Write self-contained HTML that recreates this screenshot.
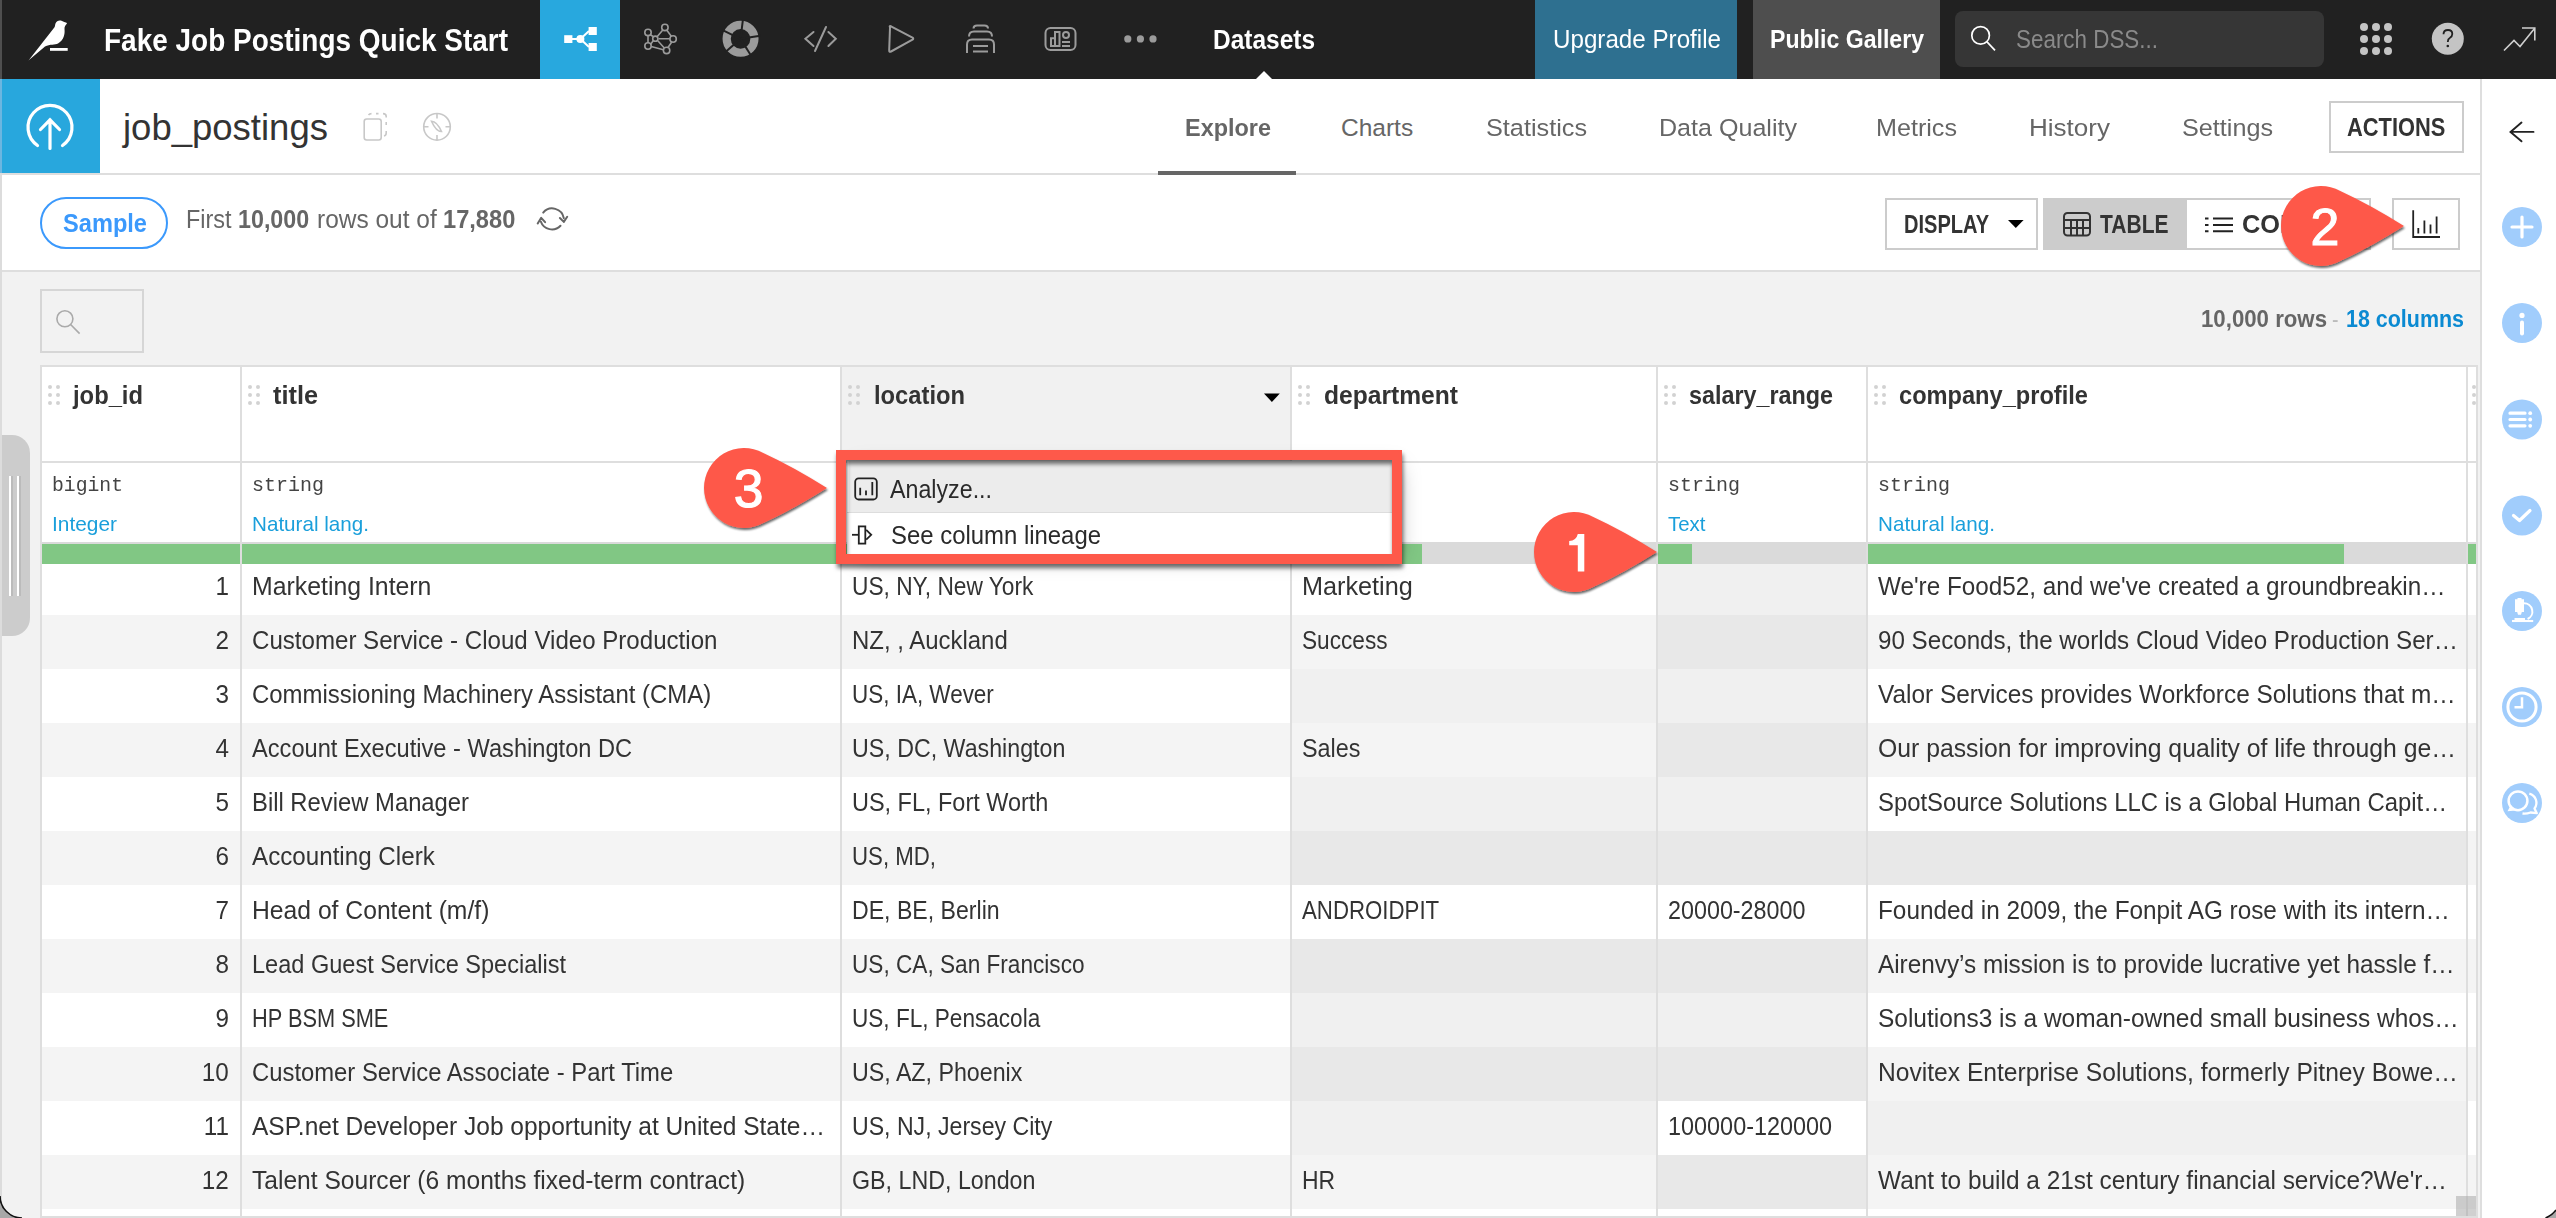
<!DOCTYPE html>
<html><head><meta charset="utf-8"><title>job_postings</title>
<style>
html,body{margin:0;padding:0;}
body{width:2556px;height:1218px;overflow:hidden;position:relative;background:#fff;font-family:"Liberation Sans",sans-serif;}
.t{position:absolute;line-height:1;white-space:nowrap;}
.r{position:absolute;}
.s{position:absolute;overflow:visible;}
</style></head><body>
<div class="r" style="left:0px;top:0px;width:2556px;height:1218px;background:#ffffff;"></div>
<div class="r" style="left:0px;top:0px;width:2556px;height:79px;background:#212121;"></div>
<svg class="s" style="left:20px;top:15px;" width="55" height="50" viewBox="20 15 55 50"><path fill="#fff" d="M27.8,61 L45,46.5 C50,44 55,45 58,43.5 C64,40 65,34 64.5,29 C64.3,27 65.5,25 67,23.5 L66.5,22.8 C65,22.6 63.5,21.8 62,21 C59.5,19.8 56.5,20.8 55.5,23.5 C55,25 55,26.5 54.5,27.2 L28.5,60.5 Z"/><rect fill="#fff" x="50" y="48" width="17.7" height="2.8"/></svg>
<div class="t" style="left:104.00px;top:23.80px;font-size:32px;color:#fff;font-weight:700;font-family:'Liberation Sans',sans-serif;transform:scaleX(0.8738);transform-origin:left top;">Fake Job Postings Quick Start</div>
<div class="r" style="left:540px;top:0px;width:80px;height:79px;background:#28a8de;"></div>
<svg class="s" style="left:555px;top:20px;" width="50" height="40" viewBox="555 20 50 40"><g fill="#fff" stroke="#fff"><rect x="564.2" y="35.2" width="8.2" height="7.8" stroke="none"/><rect x="588.6" y="27" width="8.2" height="8" stroke="none"/><rect x="588.6" y="43" width="8.2" height="8" stroke="none"/><circle cx="580.4" cy="39" r="4" stroke="none"/><path d="M572,39 H580 M580.4,39 L589,31 M580.4,39 L589,47" stroke-width="2" fill="none"/></g></svg>
<svg class="s" style="left:640px;top:20px;" width="40" height="40" viewBox="640 20 40 40"><g stroke="#9b9b9b" stroke-width="1.6" fill="none"><path d="M648,35.5 V43 M650.3,34.6 L653,36.5 M657.3,36.5 L663,29.8 M666.7,30 L671.3,36.3 M658.5,38.7 H669.8 M671.7,42 L668,47.5 M657.8,40.8 L664.3,48 M650.5,44.5 L653.2,40.8 M651.2,46.6 L663.3,49.7"/><circle cx="648" cy="32.4" r="3.2"/><circle cx="664.9" cy="27.4" r="3.2"/><circle cx="673.1" cy="39" r="3.2"/><circle cx="666.6" cy="50.4" r="3.2"/><circle cx="648" cy="46" r="3.2"/><circle cx="655.3" cy="38.7" r="2.6"/></g></svg>
<svg class="s" style="left:718px;top:17px;" width="45" height="45" viewBox="718 17 45 45"><circle cx="740.55" cy="38.85" r="13.9" stroke="#9b9b9b" stroke-width="8.2" fill="none"/><g stroke="#212121" stroke-width="2"><path d="M740.55,38.85 L742.99,19.00"/><path d="M740.55,38.85 L760.30,35.72"/><path d="M740.55,38.85 L751.15,55.81"/><path d="M740.55,38.85 L725.46,51.97"/><path d="M740.55,38.85 L722.57,30.08"/></g></svg>
<svg class="s" style="left:800px;top:20px;" width="42" height="40" viewBox="800 20 42 40"><g stroke="#9b9b9b" stroke-width="2" fill="none" stroke-linecap="round"><path d="M813.5,32 L805.4,38.7 L813.5,46 M828.4,32 L835.8,38.7 L828.4,46 M826,27 L815,51"/></g></svg>
<svg class="s" style="left:882px;top:20px;" width="40" height="40" viewBox="882 20 40 40"><path d="M890,27.5 Q889,25.5 891,26.3 L912.5,37.7 Q914,38.7 912.5,39.7 L891,51.5 Q889,52.6 889.2,50 Z" fill="none" stroke="#9b9b9b" stroke-width="2" stroke-linejoin="round"/></svg>
<svg class="s" style="left:960px;top:20px;" width="42" height="40" viewBox="960 20 42 40"><g stroke="#9b9b9b" stroke-width="2" fill="none"><path d="M973.5,28.5 Q973.5,25.5 977,25.5 H984.5 Q988,25.5 988,28.5"/><path d="M969,36.5 Q969,31.5 974,31.5 H987 Q992,31.5 992,36.5"/><path d="M967,53 V44.5 Q967,39.5 972,39.5 H989 Q994,39.5 994,44.5 V53"/><path d="M973,46 H988 M973,51.6 H988"/></g></svg>
<svg class="s" style="left:1040px;top:22px;" width="42" height="34" viewBox="1040 22 42 34"><g stroke="#9b9b9b" stroke-width="2" fill="none"><rect x="1045.5" y="28" width="30" height="22" rx="5"/><path d="M1051,46 V38.3 H1055 V46 Z M1055,46 V32 H1059.5 V46 Z"/><circle cx="1066" cy="35" r="3"/><path d="M1062,42 H1070 M1062,46 H1070"/></g></svg>
<svg class="s" style="left:1120px;top:30px;" width="40" height="18" viewBox="1120 30 40 18"><g fill="#9b9b9b"><circle cx="1127.8" cy="38.9" r="3.6"/><circle cx="1140.4" cy="38.9" r="3.6"/><circle cx="1153" cy="38.9" r="3.6"/></g></svg>
<div class="t" style="left:1213.00px;top:27.05px;font-size:27px;color:#fff;font-weight:700;font-family:'Liberation Sans',sans-serif;transform:scaleX(0.9062);transform-origin:left top;">Datasets</div>
<svg class="s" style="left:1250px;top:68px;" width="30" height="12" viewBox="1250 68 30 12"><path d="M1256,79 L1264,71 L1272,79 Z" fill="#fff"/></svg>
<div class="r" style="left:1535px;top:0px;width:202px;height:79px;background:#2e7090;"></div>
<div class="t" style="left:1552.50px;top:25.90px;font-size:26px;color:#fff;font-weight:400;font-family:'Liberation Sans',sans-serif;transform:scaleX(0.9299);transform-origin:left top;">Upgrade Profile</div>
<div class="r" style="left:1753px;top:0px;width:187px;height:79px;background:#4e4e4e;"></div>
<div class="t" style="left:1770.00px;top:25.90px;font-size:26px;color:#fff;font-weight:700;font-family:'Liberation Sans',sans-serif;transform:scaleX(0.8881);transform-origin:left top;">Public Gallery</div>
<div class="r" style="left:1955px;top:11px;width:369px;height:55.5px;background:#363636;border-radius:8px;"></div>
<svg class="s" style="left:1965px;top:20px;" width="40" height="40" viewBox="1965 20 40 40"><g stroke="#fff" stroke-width="1.7" fill="none"><circle cx="1980.6" cy="35.4" r="8.8"/><path d="M1987,41.8 L1995,50.3"/></g></svg>
<div class="t" style="left:2016.00px;top:26.75px;font-size:25px;color:#8a8a8a;font-weight:400;font-family:'Liberation Sans',sans-serif;transform:scaleX(0.8965);transform-origin:left top;">Search DSS...</div>
<svg class="s" style="left:2355px;top:18px;" width="45" height="45" viewBox="2355 18 45 45"><g fill="#c4c4c4"><circle cx="2364" cy="27" r="4"/><circle cx="2364" cy="39" r="4"/><circle cx="2364" cy="51" r="4"/><circle cx="2376" cy="27" r="4"/><circle cx="2376" cy="39" r="4"/><circle cx="2376" cy="51" r="4"/><circle cx="2388" cy="27" r="4"/><circle cx="2388" cy="39" r="4"/><circle cx="2388" cy="51" r="4"/></g></svg>
<svg class="s" style="left:2425px;top:17px;" width="45" height="45" viewBox="2425 17 45 45"><circle cx="2447.8" cy="38.8" r="16" fill="#c4c4c4"/><path d="M2443.5,34.3 Q2443.5,30 2448,30 Q2452.3,30 2452.3,34 Q2452.3,36.5 2449.7,38 Q2447.8,39 2447.8,42" stroke="#212121" stroke-width="1.8" fill="none"/><circle cx="2447.8" cy="46" r="1.3" fill="#212121"/></svg>
<svg class="s" style="left:2495px;top:20px;" width="50" height="40" viewBox="2495 20 50 40"><g stroke="#cfcfcf" stroke-width="1.6" fill="none"><path d="M2504,50.5 L2514,40.5 L2520,46.5 L2534.5,28.5"/><path d="M2522,28 H2534.8 V40.5"/></g></svg>
<div class="r" style="left:0px;top:79px;width:100px;height:94px;background:#28a7dd;"></div>
<svg class="s" style="left:0px;top:79px;" width="100" height="94" viewBox="0 79 100 94"><g stroke="#fff" stroke-width="3.2" fill="none" stroke-linecap="round"><path d="M37.5,145.5 A22,22 0 1 1 62.5,145.5"/><path d="M50,148.5 V119.5 M40.5,129.5 L50,119.8 L59.5,129.5"/></g></svg>
<div class="t" style="left:123.00px;top:109.97px;font-size:36.5px;color:#333;font-weight:400;font-family:'Liberation Sans',sans-serif;">job_postings</div>
<svg class="s" style="left:355px;top:105px;" width="100" height="45" viewBox="355 105 100 45"><g stroke="#c8c8c8" stroke-width="1.6" fill="none"><rect x="364.2" y="119" width="17" height="21" rx="2.5"/><path d="M368.5,115 Q369.5,113.6 371.5,113.6 M376,113.6 H378.5 M383,113.6 Q386.2,113.6 386.2,116.5 V117.5 M386.2,122 V125 M386.2,131 V133 Q386.2,135.5 384,136"/><circle cx="437" cy="126.8" r="13.3"/><path d="M437,113.5 V118.5 M437,135 V140 M423.7,126.8 H428.5 M445.5,126.8 H450.3"/><path d="M431.5,121.2 Q437,121.5 441.5,131.5 Q436,131.5 431.5,121.2 Z"/></g></svg>
<div class="t" style="left:1185.00px;top:115.98px;font-size:24.5px;color:#666;font-weight:700;font-family:'Liberation Sans',sans-serif;transform:scaleX(0.9570);transform-origin:left top;">Explore</div>
<div class="t" style="left:1341.00px;top:115.98px;font-size:24.5px;color:#666;font-weight:400;font-family:'Liberation Sans',sans-serif;">Charts</div>
<div class="t" style="left:1486.00px;top:115.98px;font-size:24.5px;color:#666;font-weight:400;font-family:'Liberation Sans',sans-serif;transform:scaleX(1.0304);transform-origin:left top;">Statistics</div>
<div class="t" style="left:1659.00px;top:115.98px;font-size:24.5px;color:#666;font-weight:400;font-family:'Liberation Sans',sans-serif;transform:scaleX(1.0237);transform-origin:left top;">Data Quality</div>
<div class="t" style="left:1876.00px;top:115.98px;font-size:24.5px;color:#666;font-weight:400;font-family:'Liberation Sans',sans-serif;transform:scaleX(1.0260);transform-origin:left top;">Metrics</div>
<div class="t" style="left:2029.00px;top:115.98px;font-size:24.5px;color:#666;font-weight:400;font-family:'Liberation Sans',sans-serif;transform:scaleX(1.0626);transform-origin:left top;">History</div>
<div class="t" style="left:2182.00px;top:115.98px;font-size:24.5px;color:#666;font-weight:400;font-family:'Liberation Sans',sans-serif;transform:scaleX(1.0279);transform-origin:left top;">Settings</div>
<div class="r" style="left:0px;top:173px;width:2480px;height:2px;background:#dedede;"></div>
<div class="r" style="left:1158px;top:171px;width:138px;height:4px;background:#666;"></div>
<div class="r" style="left:2329px;top:101px;width:135px;height:52px;background:#fff;box-sizing:border-box;border:2px solid #cccccc;"></div>
<div class="t" style="left:2346.60px;top:115.33px;font-size:25.5px;color:#333;font-weight:700;font-family:'Liberation Sans',sans-serif;transform:scaleX(0.8575);transform-origin:left top;">ACTIONS</div>
<div class="r" style="left:2480px;top:79px;width:2px;height:1139px;background:#dedede;"></div>
<svg class="s" style="left:2505px;top:115px;" width="35" height="35" viewBox="2505 115 35 35"><g stroke="#222" stroke-width="1.9" fill="none" stroke-linecap="round"><path d="M2510.5,131.9 H2533.5 M2521.5,122.6 L2510.5,131.9 L2521.5,141.3"/></g></svg>
<svg class="s" style="left:2500px;top:205px;" width="44" height="44" viewBox="2500 205 44 44"><circle cx="2522" cy="227" r="20" fill="#a1cdfc"/><path d="M2512,227 H2532 M2522,217 V237" stroke="#fff" stroke-width="3.2" stroke-linecap="round"/></svg>
<svg class="s" style="left:2500px;top:301px;" width="44" height="44" viewBox="2500 301 44 44"><circle cx="2522" cy="323" r="20" fill="#a1cdfc"/><circle cx="2522" cy="315.4" r="2.6" fill="#fff"/><path d="M2522,322.5 V333.5" stroke="#fff" stroke-width="4" stroke-linecap="round"/></svg>
<svg class="s" style="left:2500px;top:397px;" width="44" height="44" viewBox="2500 397 44 44"><circle cx="2522" cy="419.5" r="20" fill="#a1cdfc"/><path d="M2510,413.2 H2525 M2510,419.5 H2525 M2510,425.8 H2525" stroke="#fff" stroke-width="3.2" stroke-linecap="round"/><circle cx="2530.2" cy="413.2" r="1.9" fill="#fff"/><circle cx="2530.2" cy="419.5" r="1.9" fill="#fff"/><circle cx="2530.2" cy="425.8" r="1.9" fill="#fff"/></svg>
<svg class="s" style="left:2500px;top:493px;" width="44" height="44" viewBox="2500 493 44 44"><circle cx="2522" cy="515.5" r="20" fill="#a1cdfc"/><path d="M2513.5,515.5 L2519.5,520.5 L2530,510.5" stroke="#fff" stroke-width="3.2" fill="none" stroke-linecap="round" stroke-linejoin="round"/></svg>
<svg class="s" style="left:2500px;top:589px;" width="44" height="44" viewBox="2500 589 44 44"><circle cx="2522" cy="611" r="20" fill="#a1cdfc"/><path d="M2515,599.2 H2517.5 V598 H2521.5 V599.2 H2524 V612.1 H2521.8 L2521,614.8 H2518 L2517.2,612.1 H2515 Z" fill="#fff"/><path d="M2524,603.2 A8.3,8.3 0 0 1 2527.6,619" stroke="#fff" stroke-width="2" fill="none"/><path d="M2512,621 H2533.2" stroke="#fff" stroke-width="2.1"/><path d="M2514.5,619 H2525" stroke="#fff" stroke-width="2"/></svg>
<svg class="s" style="left:2500px;top:685px;" width="44" height="44" viewBox="2500 685 44 44"><circle cx="2522" cy="707" r="20" fill="#a1cdfc"/><circle cx="2522" cy="707" r="14.1" stroke="#fff" stroke-width="3" fill="none"/><path d="M2522,697.3 V707.3 H2514.5" stroke="#fff" stroke-width="2.5" fill="none"/></svg>
<svg class="s" style="left:2500px;top:781px;" width="44" height="44" viewBox="2500 781 44 44"><circle cx="2522" cy="803" r="20" fill="#a1cdfc"/><circle cx="2518" cy="800.8" r="9.4" stroke="#fff" stroke-width="2.5" fill="none"/><path d="M2507.5,811.2 L2510.8,805 L2516,810.6 Z" fill="#fff"/><path d="M2529.3,793.6 A9.5,9.5 0 0 1 2534.5,808.5 L2536.8,813.2 L2530.5,812.5 Q2526.5,814 2522.5,813.5" stroke="#fff" stroke-width="2.3" fill="none" stroke-linejoin="round"/></svg>
<div class="r" style="left:40px;top:197px;width:128px;height:52px;background:#fff;box-sizing:border-box;border:2px solid #3b99fc;border-radius:26px;"></div>
<div class="t" style="left:62.80px;top:211.32px;font-size:25.5px;color:#3b99fc;font-weight:700;font-family:'Liberation Sans',sans-serif;transform:scaleX(0.9261);transform-origin:left top;">Sample</div>
<div class="t" style="left:185.50px;top:207.32px;font-size:25.5px;color:#666;font-weight:400;font-family:'Liberation Sans',sans-serif;transform:scaleX(0.9179);transform-origin:left top;">First</div>
<div class="t" style="left:238.30px;top:207.32px;font-size:25.5px;color:#666;font-weight:700;font-family:'Liberation Sans',sans-serif;transform:scaleX(0.9129);transform-origin:left top;">10,000</div>
<div class="t" style="left:317.20px;top:207.32px;font-size:25.5px;color:#666;font-weight:400;font-family:'Liberation Sans',sans-serif;transform:scaleX(0.9597);transform-origin:left top;">rows out of</div>
<div class="t" style="left:443.20px;top:207.32px;font-size:25.5px;color:#666;font-weight:700;font-family:'Liberation Sans',sans-serif;transform:scaleX(0.9270);transform-origin:left top;">17,880</div>
<svg class="s" style="left:535px;top:203px;" width="35" height="34" viewBox="535 203 35 34"><g stroke="#666" stroke-width="2" fill="none" stroke-linecap="round" stroke-linejoin="round"><path d="M543.2,212.6 A11.8,11.8 0 0 1 563.8,218.2"/><path d="M560.5,225.7 A11.8,11.8 0 0 1 540.8,221.5"/><path d="M537.7,223.5 L541.2,217.8 L545.1,222.2"/><path d="M567.2,216.8 L563.8,221.9 L559.9,218"/></g></svg>
<div class="r" style="left:1885px;top:198px;width:153px;height:52px;background:#fff;box-sizing:border-box;border:2px solid #cccccc;"></div>
<div class="t" style="left:1904.20px;top:212.32px;font-size:25.5px;color:#333;font-weight:700;font-family:'Liberation Sans',sans-serif;transform:scaleX(0.7858);transform-origin:left top;">DISPLAY</div>
<svg class="s" style="left:2005px;top:218px;" width="22" height="12" viewBox="2005 218 22 12"><path d="M2008,220 H2023.6 L2015.8,228 Z" fill="#000"/></svg>
<div class="r" style="left:2043px;top:198px;width:328px;height:52px;background:#fff;box-sizing:border-box;border:2px solid #cccccc;"></div>
<div class="r" style="left:2043px;top:198px;width:144px;height:52px;background:#cccccc;"></div>
<svg class="s" style="left:2060px;top:208px;" width="35" height="32" viewBox="2060 208 35 32"><g stroke="#333" stroke-width="2" fill="none"><rect x="2064" y="213" width="26" height="22.5" rx="3.5"/><path d="M2064,220 H2090 M2064,228 H2090 M2071,220 V235.5 M2077,220 V235.5 M2083,220 V235.5"/></g></svg>
<div class="t" style="left:2099.60px;top:212.32px;font-size:25.5px;color:#333;font-weight:700;font-family:'Liberation Sans',sans-serif;transform:scaleX(0.8243);transform-origin:left top;">TABLE</div>
<svg class="s" style="left:2200px;top:212px;" width="40" height="25" viewBox="2200 212 40 25"><g stroke="#222" stroke-width="2" fill="none"><path d="M2205,218.5 H2208.5 M2205,225 H2208.5 M2205,231.2 H2208.5 M2213,218.5 H2233 M2213,225 H2233 M2213,231.2 H2233"/></g></svg>
<div class="t" style="left:2242.00px;top:212.32px;font-size:25.5px;color:#333;font-weight:700;font-family:'Liberation Sans',sans-serif;transform:scaleX(0.9930);transform-origin:left top;">COLUMNS</div>
<div class="r" style="left:2392px;top:198px;width:68px;height:52px;background:#fff;box-sizing:border-box;border:2px solid #cccccc;"></div>
<svg class="s" style="left:2405px;top:205px;" width="42" height="38" viewBox="2405 205 42 38"><g stroke="#222" stroke-width="1.8" fill="none"><path d="M2413.2,210.3 V237 H2440 M2418.3,228 V233.6 M2424.4,220.5 V233.6 M2430.5,224.4 V233.6 M2436.6,216.4 V233.6"/></g></svg>
<div class="r" style="left:0px;top:270px;width:2480px;height:948px;background:#f2f2f2;"></div>
<div class="r" style="left:0px;top:270px;width:2480px;height:2px;background:#dedede;"></div>
<div class="r" style="left:40px;top:289px;width:104px;height:64px;background:#f2f2f2;box-sizing:border-box;border:2px solid #d6d6d6;"></div>
<svg class="s" style="left:52px;top:305px;" width="35" height="35" viewBox="52 305 35 35"><g stroke="#aaa" stroke-width="1.6" fill="none"><circle cx="64.9" cy="318.8" r="8"/><path d="M70.6,324.5 L79.6,333.6"/></g></svg>
<div class="t" style="left:2201.00px;top:308.45px;font-size:23px;color:#666;font-weight:700;font-family:'Liberation Sans',sans-serif;transform:scaleX(0.9661);transform-origin:left top;">10,000 rows</div>
<div class="t" style="left:2332.00px;top:308.45px;font-size:23px;color:#bbbbbb;font-weight:400;font-family:'Liberation Sans',sans-serif;transform:scaleX(0.8486);transform-origin:left top;">-</div>
<div class="t" style="left:2345.50px;top:308.45px;font-size:23px;color:#0b8ad2;font-weight:700;font-family:'Liberation Sans',sans-serif;transform:scaleX(0.9325);transform-origin:left top;">18 columns</div>
<div class="r" style="left:2px;top:435px;width:28px;height:201px;background:#cccccc;border-radius:0 18px 18px 0;"></div>
<div class="r" style="left:9px;top:476px;width:2px;height:120px;background:#ffffff;"></div>
<div class="r" style="left:11px;top:476px;width:2px;height:120px;background:#bbbbbb;"></div>
<div class="r" style="left:17px;top:476px;width:2px;height:120px;background:#ffffff;"></div>
<div class="r" style="left:19px;top:476px;width:2px;height:120px;background:#bbbbbb;"></div>
<div class="r" style="left:0px;top:79px;width:2px;height:1139px;background:#dcdcdc;"></div>
<div class="r" style="left:0px;top:0px;width:2px;height:79px;background:#4f4f4f;"></div>
<div class="r" style="left:0px;top:79px;width:2px;height:94px;background:#6cb6e0;"></div>
<div class="r" style="left:40px;top:365px;width:2438px;height:853px;background:#dedede;"></div>
<div class="r" style="left:42px;top:367px;width:2434px;height:849px;background:#ffffff;"></div>
<div class="r" style="left:842px;top:367px;width:448px;height:94px;background:#f1f1f1;"></div>
<div class="r" style="left:42px;top:461px;width:2434px;height:2px;background:#dedede;"></div>
<div class="r" style="left:42px;top:542px;width:2434px;height:22px;background:#dadada;"></div>
<div class="r" style="left:42px;top:544px;width:198px;height:20px;background:#81c784;"></div>
<div class="r" style="left:242px;top:544px;width:598px;height:20px;background:#81c784;"></div>
<div class="r" style="left:842px;top:544px;width:448px;height:20px;background:#81c784;"></div>
<div class="r" style="left:1292px;top:544px;width:130px;height:20px;background:#81c784;"></div>
<div class="r" style="left:1658px;top:544px;width:34px;height:20px;background:#81c784;"></div>
<div class="r" style="left:1868px;top:544px;width:476px;height:20px;background:#81c784;"></div>
<div class="r" style="left:2468px;top:544px;width:8px;height:20px;background:#81c784;"></div>
<div class="r" style="left:42px;top:564px;width:198px;height:51px;background:#ffffff;"></div>
<div class="r" style="left:242px;top:564px;width:598px;height:51px;background:#ffffff;"></div>
<div class="r" style="left:842px;top:564px;width:448px;height:51px;background:#ffffff;"></div>
<div class="r" style="left:1292px;top:564px;width:364px;height:51px;background:#ffffff;"></div>
<div class="r" style="left:1658px;top:564px;width:208px;height:51px;background:#f0f0f0;"></div>
<div class="r" style="left:1868px;top:564px;width:598px;height:51px;background:#ffffff;"></div>
<div class="r" style="left:2468px;top:564px;width:8px;height:51px;background:#ffffff;"></div>
<div class="t" style="left:215.10px;top:573.75px;font-size:25px;color:#333;font-weight:400;font-family:'Liberation Sans',sans-serif;transform:scaleX(0.9700);transform-origin:right top;">1</div>
<div class="t" style="left:252.00px;top:573.75px;font-size:25px;color:#333;font-weight:400;font-family:'Liberation Sans',sans-serif;transform:scaleX(0.9932);transform-origin:left top;">Marketing Intern</div>
<div class="t" style="left:852.00px;top:573.75px;font-size:25px;color:#333;font-weight:400;font-family:'Liberation Sans',sans-serif;transform:scaleX(0.9085);transform-origin:left top;">US, NY, New York</div>
<div class="t" style="left:1302.00px;top:573.75px;font-size:25px;color:#333;font-weight:400;font-family:'Liberation Sans',sans-serif;transform:scaleX(1.0094);transform-origin:left top;">Marketing</div>
<div class="t" style="left:1878.00px;top:573.75px;font-size:25px;color:#333;font-weight:400;font-family:'Liberation Sans',sans-serif;transform:scaleX(0.9711);transform-origin:left top;">We're Food52, and we've created a groundbreakin…</div>
<div class="r" style="left:42px;top:615px;width:198px;height:54px;background:#f4f4f4;"></div>
<div class="r" style="left:242px;top:615px;width:598px;height:54px;background:#f4f4f4;"></div>
<div class="r" style="left:842px;top:615px;width:448px;height:54px;background:#f4f4f4;"></div>
<div class="r" style="left:1292px;top:615px;width:364px;height:54px;background:#f4f4f4;"></div>
<div class="r" style="left:1658px;top:615px;width:208px;height:54px;background:#e8e8e8;"></div>
<div class="r" style="left:1868px;top:615px;width:598px;height:54px;background:#f4f4f4;"></div>
<div class="r" style="left:2468px;top:615px;width:8px;height:54px;background:#f4f4f4;"></div>
<div class="t" style="left:215.10px;top:627.75px;font-size:25px;color:#333;font-weight:400;font-family:'Liberation Sans',sans-serif;transform:scaleX(0.9700);transform-origin:right top;">2</div>
<div class="t" style="left:252.00px;top:627.75px;font-size:25px;color:#333;font-weight:400;font-family:'Liberation Sans',sans-serif;transform:scaleX(0.9634);transform-origin:left top;">Customer Service - Cloud Video Production</div>
<div class="t" style="left:852.00px;top:627.75px;font-size:25px;color:#333;font-weight:400;font-family:'Liberation Sans',sans-serif;transform:scaleX(0.9579);transform-origin:left top;">NZ, , Auckland</div>
<div class="t" style="left:1302.00px;top:627.75px;font-size:25px;color:#333;font-weight:400;font-family:'Liberation Sans',sans-serif;transform:scaleX(0.9055);transform-origin:left top;">Success</div>
<div class="t" style="left:1878.00px;top:627.75px;font-size:25px;color:#333;font-weight:400;font-family:'Liberation Sans',sans-serif;transform:scaleX(0.9665);transform-origin:left top;">90 Seconds, the worlds Cloud Video Production Ser…</div>
<div class="r" style="left:42px;top:669px;width:198px;height:54px;background:#ffffff;"></div>
<div class="r" style="left:242px;top:669px;width:598px;height:54px;background:#ffffff;"></div>
<div class="r" style="left:842px;top:669px;width:448px;height:54px;background:#ffffff;"></div>
<div class="r" style="left:1292px;top:669px;width:364px;height:54px;background:#f0f0f0;"></div>
<div class="r" style="left:1658px;top:669px;width:208px;height:54px;background:#f0f0f0;"></div>
<div class="r" style="left:1868px;top:669px;width:598px;height:54px;background:#ffffff;"></div>
<div class="r" style="left:2468px;top:669px;width:8px;height:54px;background:#ffffff;"></div>
<div class="t" style="left:215.10px;top:681.75px;font-size:25px;color:#333;font-weight:400;font-family:'Liberation Sans',sans-serif;transform:scaleX(0.9700);transform-origin:right top;">3</div>
<div class="t" style="left:252.00px;top:681.75px;font-size:25px;color:#333;font-weight:400;font-family:'Liberation Sans',sans-serif;transform:scaleX(0.9581);transform-origin:left top;">Commissioning Machinery Assistant (CMA)</div>
<div class="t" style="left:852.00px;top:681.75px;font-size:25px;color:#333;font-weight:400;font-family:'Liberation Sans',sans-serif;transform:scaleX(0.8981);transform-origin:left top;">US, IA, Wever</div>
<div class="t" style="left:1878.00px;top:681.75px;font-size:25px;color:#333;font-weight:400;font-family:'Liberation Sans',sans-serif;transform:scaleX(0.9753);transform-origin:left top;">Valor Services provides Workforce Solutions that m…</div>
<div class="r" style="left:42px;top:723px;width:198px;height:54px;background:#f4f4f4;"></div>
<div class="r" style="left:242px;top:723px;width:598px;height:54px;background:#f4f4f4;"></div>
<div class="r" style="left:842px;top:723px;width:448px;height:54px;background:#f4f4f4;"></div>
<div class="r" style="left:1292px;top:723px;width:364px;height:54px;background:#f4f4f4;"></div>
<div class="r" style="left:1658px;top:723px;width:208px;height:54px;background:#e8e8e8;"></div>
<div class="r" style="left:1868px;top:723px;width:598px;height:54px;background:#f4f4f4;"></div>
<div class="r" style="left:2468px;top:723px;width:8px;height:54px;background:#f4f4f4;"></div>
<div class="t" style="left:215.10px;top:735.75px;font-size:25px;color:#333;font-weight:400;font-family:'Liberation Sans',sans-serif;transform:scaleX(0.9700);transform-origin:right top;">4</div>
<div class="t" style="left:252.00px;top:735.75px;font-size:25px;color:#333;font-weight:400;font-family:'Liberation Sans',sans-serif;transform:scaleX(0.9456);transform-origin:left top;">Account Executive - Washington DC</div>
<div class="t" style="left:852.00px;top:735.75px;font-size:25px;color:#333;font-weight:400;font-family:'Liberation Sans',sans-serif;transform:scaleX(0.9290);transform-origin:left top;">US, DC, Washington</div>
<div class="t" style="left:1302.00px;top:735.75px;font-size:25px;color:#333;font-weight:400;font-family:'Liberation Sans',sans-serif;transform:scaleX(0.9344);transform-origin:left top;">Sales</div>
<div class="t" style="left:1878.00px;top:735.75px;font-size:25px;color:#333;font-weight:400;font-family:'Liberation Sans',sans-serif;transform:scaleX(0.9904);transform-origin:left top;">Our passion for improving quality of life through ge…</div>
<div class="r" style="left:42px;top:777px;width:198px;height:54px;background:#ffffff;"></div>
<div class="r" style="left:242px;top:777px;width:598px;height:54px;background:#ffffff;"></div>
<div class="r" style="left:842px;top:777px;width:448px;height:54px;background:#ffffff;"></div>
<div class="r" style="left:1292px;top:777px;width:364px;height:54px;background:#f0f0f0;"></div>
<div class="r" style="left:1658px;top:777px;width:208px;height:54px;background:#f0f0f0;"></div>
<div class="r" style="left:1868px;top:777px;width:598px;height:54px;background:#ffffff;"></div>
<div class="r" style="left:2468px;top:777px;width:8px;height:54px;background:#ffffff;"></div>
<div class="t" style="left:215.10px;top:789.75px;font-size:25px;color:#333;font-weight:400;font-family:'Liberation Sans',sans-serif;transform:scaleX(0.9700);transform-origin:right top;">5</div>
<div class="t" style="left:252.00px;top:789.75px;font-size:25px;color:#333;font-weight:400;font-family:'Liberation Sans',sans-serif;transform:scaleX(0.9524);transform-origin:left top;">Bill Review Manager</div>
<div class="t" style="left:852.00px;top:789.75px;font-size:25px;color:#333;font-weight:400;font-family:'Liberation Sans',sans-serif;transform:scaleX(0.9383);transform-origin:left top;">US, FL, Fort Worth</div>
<div class="t" style="left:1878.00px;top:789.75px;font-size:25px;color:#333;font-weight:400;font-family:'Liberation Sans',sans-serif;transform:scaleX(0.9546);transform-origin:left top;">SpotSource Solutions LLC is a Global Human Capit…</div>
<div class="r" style="left:42px;top:831px;width:198px;height:54px;background:#f4f4f4;"></div>
<div class="r" style="left:242px;top:831px;width:598px;height:54px;background:#f4f4f4;"></div>
<div class="r" style="left:842px;top:831px;width:448px;height:54px;background:#f4f4f4;"></div>
<div class="r" style="left:1292px;top:831px;width:364px;height:54px;background:#e8e8e8;"></div>
<div class="r" style="left:1658px;top:831px;width:208px;height:54px;background:#e8e8e8;"></div>
<div class="r" style="left:1868px;top:831px;width:598px;height:54px;background:#e8e8e8;"></div>
<div class="r" style="left:2468px;top:831px;width:8px;height:54px;background:#f4f4f4;"></div>
<div class="t" style="left:215.10px;top:843.75px;font-size:25px;color:#333;font-weight:400;font-family:'Liberation Sans',sans-serif;transform:scaleX(0.9700);transform-origin:right top;">6</div>
<div class="t" style="left:252.00px;top:843.75px;font-size:25px;color:#333;font-weight:400;font-family:'Liberation Sans',sans-serif;transform:scaleX(0.9672);transform-origin:left top;">Accounting Clerk</div>
<div class="t" style="left:852.00px;top:843.75px;font-size:25px;color:#333;font-weight:400;font-family:'Liberation Sans',sans-serif;transform:scaleX(0.8892);transform-origin:left top;">US, MD,</div>
<div class="r" style="left:42px;top:885px;width:198px;height:54px;background:#ffffff;"></div>
<div class="r" style="left:242px;top:885px;width:598px;height:54px;background:#ffffff;"></div>
<div class="r" style="left:842px;top:885px;width:448px;height:54px;background:#ffffff;"></div>
<div class="r" style="left:1292px;top:885px;width:364px;height:54px;background:#ffffff;"></div>
<div class="r" style="left:1658px;top:885px;width:208px;height:54px;background:#ffffff;"></div>
<div class="r" style="left:1868px;top:885px;width:598px;height:54px;background:#ffffff;"></div>
<div class="r" style="left:2468px;top:885px;width:8px;height:54px;background:#ffffff;"></div>
<div class="t" style="left:215.10px;top:897.75px;font-size:25px;color:#333;font-weight:400;font-family:'Liberation Sans',sans-serif;transform:scaleX(0.9700);transform-origin:right top;">7</div>
<div class="t" style="left:252.00px;top:897.75px;font-size:25px;color:#333;font-weight:400;font-family:'Liberation Sans',sans-serif;transform:scaleX(0.9875);transform-origin:left top;">Head of Content (m/f)</div>
<div class="t" style="left:852.00px;top:897.75px;font-size:25px;color:#333;font-weight:400;font-family:'Liberation Sans',sans-serif;transform:scaleX(0.9241);transform-origin:left top;">DE, BE, Berlin</div>
<div class="t" style="left:1302.00px;top:897.75px;font-size:25px;color:#333;font-weight:400;font-family:'Liberation Sans',sans-serif;transform:scaleX(0.8897);transform-origin:left top;">ANDROIDPIT</div>
<div class="t" style="left:1668.00px;top:897.75px;font-size:25px;color:#333;font-weight:400;font-family:'Liberation Sans',sans-serif;transform:scaleX(0.9328);transform-origin:left top;">20000-28000</div>
<div class="t" style="left:1878.00px;top:897.75px;font-size:25px;color:#333;font-weight:400;font-family:'Liberation Sans',sans-serif;transform:scaleX(0.9729);transform-origin:left top;">Founded in 2009, the Fonpit AG rose with its intern…</div>
<div class="r" style="left:42px;top:939px;width:198px;height:54px;background:#f4f4f4;"></div>
<div class="r" style="left:242px;top:939px;width:598px;height:54px;background:#f4f4f4;"></div>
<div class="r" style="left:842px;top:939px;width:448px;height:54px;background:#f4f4f4;"></div>
<div class="r" style="left:1292px;top:939px;width:364px;height:54px;background:#e8e8e8;"></div>
<div class="r" style="left:1658px;top:939px;width:208px;height:54px;background:#e8e8e8;"></div>
<div class="r" style="left:1868px;top:939px;width:598px;height:54px;background:#f4f4f4;"></div>
<div class="r" style="left:2468px;top:939px;width:8px;height:54px;background:#f4f4f4;"></div>
<div class="t" style="left:215.10px;top:951.75px;font-size:25px;color:#333;font-weight:400;font-family:'Liberation Sans',sans-serif;transform:scaleX(0.9700);transform-origin:right top;">8</div>
<div class="t" style="left:252.00px;top:951.75px;font-size:25px;color:#333;font-weight:400;font-family:'Liberation Sans',sans-serif;transform:scaleX(0.9417);transform-origin:left top;">Lead Guest Service Specialist</div>
<div class="t" style="left:852.00px;top:951.75px;font-size:25px;color:#333;font-weight:400;font-family:'Liberation Sans',sans-serif;transform:scaleX(0.9047);transform-origin:left top;">US, CA, San Francisco</div>
<div class="t" style="left:1878.00px;top:951.75px;font-size:25px;color:#333;font-weight:400;font-family:'Liberation Sans',sans-serif;transform:scaleX(0.9725);transform-origin:left top;">Airenvy’s mission is to provide lucrative yet hassle f…</div>
<div class="r" style="left:42px;top:993px;width:198px;height:54px;background:#ffffff;"></div>
<div class="r" style="left:242px;top:993px;width:598px;height:54px;background:#ffffff;"></div>
<div class="r" style="left:842px;top:993px;width:448px;height:54px;background:#ffffff;"></div>
<div class="r" style="left:1292px;top:993px;width:364px;height:54px;background:#f0f0f0;"></div>
<div class="r" style="left:1658px;top:993px;width:208px;height:54px;background:#f0f0f0;"></div>
<div class="r" style="left:1868px;top:993px;width:598px;height:54px;background:#ffffff;"></div>
<div class="r" style="left:2468px;top:993px;width:8px;height:54px;background:#ffffff;"></div>
<div class="t" style="left:215.10px;top:1005.75px;font-size:25px;color:#333;font-weight:400;font-family:'Liberation Sans',sans-serif;transform:scaleX(0.9700);transform-origin:right top;">9</div>
<div class="t" style="left:252.00px;top:1005.75px;font-size:25px;color:#333;font-weight:400;font-family:'Liberation Sans',sans-serif;transform:scaleX(0.8710);transform-origin:left top;">HP BSM SME</div>
<div class="t" style="left:852.00px;top:1005.75px;font-size:25px;color:#333;font-weight:400;font-family:'Liberation Sans',sans-serif;transform:scaleX(0.9030);transform-origin:left top;">US, FL, Pensacola</div>
<div class="t" style="left:1878.00px;top:1005.75px;font-size:25px;color:#333;font-weight:400;font-family:'Liberation Sans',sans-serif;transform:scaleX(0.9786);transform-origin:left top;">Solutions3 is a woman-owned small business whos…</div>
<div class="r" style="left:42px;top:1047px;width:198px;height:54px;background:#f4f4f4;"></div>
<div class="r" style="left:242px;top:1047px;width:598px;height:54px;background:#f4f4f4;"></div>
<div class="r" style="left:842px;top:1047px;width:448px;height:54px;background:#f4f4f4;"></div>
<div class="r" style="left:1292px;top:1047px;width:364px;height:54px;background:#e8e8e8;"></div>
<div class="r" style="left:1658px;top:1047px;width:208px;height:54px;background:#e8e8e8;"></div>
<div class="r" style="left:1868px;top:1047px;width:598px;height:54px;background:#f4f4f4;"></div>
<div class="r" style="left:2468px;top:1047px;width:8px;height:54px;background:#f4f4f4;"></div>
<div class="t" style="left:201.19px;top:1059.75px;font-size:25px;color:#333;font-weight:400;font-family:'Liberation Sans',sans-serif;transform:scaleX(0.9700);transform-origin:right top;">10</div>
<div class="t" style="left:252.00px;top:1059.75px;font-size:25px;color:#333;font-weight:400;font-family:'Liberation Sans',sans-serif;transform:scaleX(0.9534);transform-origin:left top;">Customer Service Associate - Part Time</div>
<div class="t" style="left:852.00px;top:1059.75px;font-size:25px;color:#333;font-weight:400;font-family:'Liberation Sans',sans-serif;transform:scaleX(0.9289);transform-origin:left top;">US, AZ, Phoenix</div>
<div class="t" style="left:1878.00px;top:1059.75px;font-size:25px;color:#333;font-weight:400;font-family:'Liberation Sans',sans-serif;transform:scaleX(0.9842);transform-origin:left top;">Novitex Enterprise Solutions, formerly Pitney Bowe…</div>
<div class="r" style="left:42px;top:1101px;width:198px;height:54px;background:#ffffff;"></div>
<div class="r" style="left:242px;top:1101px;width:598px;height:54px;background:#ffffff;"></div>
<div class="r" style="left:842px;top:1101px;width:448px;height:54px;background:#ffffff;"></div>
<div class="r" style="left:1292px;top:1101px;width:364px;height:54px;background:#f0f0f0;"></div>
<div class="r" style="left:1658px;top:1101px;width:208px;height:54px;background:#ffffff;"></div>
<div class="r" style="left:1868px;top:1101px;width:598px;height:54px;background:#f0f0f0;"></div>
<div class="r" style="left:2468px;top:1101px;width:8px;height:54px;background:#ffffff;"></div>
<div class="t" style="left:203.05px;top:1113.75px;font-size:25px;color:#333;font-weight:400;font-family:'Liberation Sans',sans-serif;transform:scaleX(0.9700);transform-origin:right top;">11</div>
<div class="t" style="left:252.00px;top:1113.75px;font-size:25px;color:#333;font-weight:400;font-family:'Liberation Sans',sans-serif;transform:scaleX(0.9800);transform-origin:left top;">ASP.net Developer Job opportunity at United State…</div>
<div class="t" style="left:852.00px;top:1113.75px;font-size:25px;color:#333;font-weight:400;font-family:'Liberation Sans',sans-serif;transform:scaleX(0.9240);transform-origin:left top;">US, NJ, Jersey City</div>
<div class="t" style="left:1668.00px;top:1113.75px;font-size:25px;color:#333;font-weight:400;font-family:'Liberation Sans',sans-serif;transform:scaleX(0.9368);transform-origin:left top;">100000-120000</div>
<div class="r" style="left:42px;top:1155px;width:198px;height:54px;background:#f4f4f4;"></div>
<div class="r" style="left:242px;top:1155px;width:598px;height:54px;background:#f4f4f4;"></div>
<div class="r" style="left:842px;top:1155px;width:448px;height:54px;background:#f4f4f4;"></div>
<div class="r" style="left:1292px;top:1155px;width:364px;height:54px;background:#f4f4f4;"></div>
<div class="r" style="left:1658px;top:1155px;width:208px;height:54px;background:#e8e8e8;"></div>
<div class="r" style="left:1868px;top:1155px;width:598px;height:54px;background:#f4f4f4;"></div>
<div class="r" style="left:2468px;top:1155px;width:8px;height:54px;background:#f4f4f4;"></div>
<div class="t" style="left:201.19px;top:1167.75px;font-size:25px;color:#333;font-weight:400;font-family:'Liberation Sans',sans-serif;transform:scaleX(0.9700);transform-origin:right top;">12</div>
<div class="t" style="left:252.00px;top:1167.75px;font-size:25px;color:#333;font-weight:400;font-family:'Liberation Sans',sans-serif;transform:scaleX(0.9832);transform-origin:left top;">Talent Sourcer (6 months fixed-term contract)</div>
<div class="t" style="left:852.00px;top:1167.75px;font-size:25px;color:#333;font-weight:400;font-family:'Liberation Sans',sans-serif;transform:scaleX(0.9295);transform-origin:left top;">GB, LND, London</div>
<div class="t" style="left:1302.00px;top:1167.75px;font-size:25px;color:#333;font-weight:400;font-family:'Liberation Sans',sans-serif;transform:scaleX(0.9180);transform-origin:left top;">HR</div>
<div class="t" style="left:1878.00px;top:1167.75px;font-size:25px;color:#333;font-weight:400;font-family:'Liberation Sans',sans-serif;transform:scaleX(0.9761);transform-origin:left top;">Want to build a 21st century financial service?We'r…</div>
<div class="r" style="left:42px;top:1209px;width:198px;height:7px;background:#ffffff;"></div>
<div class="r" style="left:242px;top:1209px;width:598px;height:7px;background:#ffffff;"></div>
<div class="r" style="left:842px;top:1209px;width:448px;height:7px;background:#ffffff;"></div>
<div class="r" style="left:1292px;top:1209px;width:364px;height:7px;background:#ffffff;"></div>
<div class="r" style="left:1658px;top:1209px;width:208px;height:7px;background:#ffffff;"></div>
<div class="r" style="left:1868px;top:1209px;width:598px;height:7px;background:#ffffff;"></div>
<div class="r" style="left:2468px;top:1209px;width:8px;height:7px;background:#ffffff;"></div>
<div class="r" style="left:240px;top:367px;width:2px;height:849px;background:#dedede;"></div>
<div class="r" style="left:840px;top:367px;width:2px;height:849px;background:#dedede;"></div>
<div class="r" style="left:1290px;top:367px;width:2px;height:849px;background:#dedede;"></div>
<div class="r" style="left:1656px;top:367px;width:2px;height:849px;background:#dedede;"></div>
<div class="r" style="left:1866px;top:367px;width:2px;height:849px;background:#dedede;"></div>
<div class="r" style="left:2466px;top:367px;width:2px;height:849px;background:#dedede;"></div>
<div class="t" style="left:73.00px;top:382.93px;font-size:25.5px;color:#333;font-weight:700;font-family:'Liberation Sans',sans-serif;transform:scaleX(0.9323);transform-origin:left top;">job_id</div>
<div class="t" style="left:273.00px;top:382.93px;font-size:25.5px;color:#333;font-weight:700;font-family:'Liberation Sans',sans-serif;transform:scaleX(0.9926);transform-origin:left top;">title</div>
<div class="t" style="left:874.00px;top:382.93px;font-size:25.5px;color:#333;font-weight:700;font-family:'Liberation Sans',sans-serif;transform:scaleX(0.9309);transform-origin:left top;">location</div>
<div class="t" style="left:1324.00px;top:382.93px;font-size:25.5px;color:#333;font-weight:700;font-family:'Liberation Sans',sans-serif;transform:scaleX(0.9650);transform-origin:left top;">department</div>
<div class="t" style="left:1689.00px;top:382.93px;font-size:25.5px;color:#333;font-weight:700;font-family:'Liberation Sans',sans-serif;transform:scaleX(0.9151);transform-origin:left top;">salary_range</div>
<div class="t" style="left:1899.00px;top:382.93px;font-size:25.5px;color:#333;font-weight:700;font-family:'Liberation Sans',sans-serif;transform:scaleX(0.9262);transform-origin:left top;">company_profile</div>
<svg class="s" style="left:42px;top:380px;" width="2434" height="30" viewBox="42 380 2434 30"><g fill="#d2d2d2"><circle cx="50" cy="387" r="2"/><circle cx="58" cy="387" r="2"/><circle cx="50" cy="395" r="2"/><circle cx="58" cy="395" r="2"/><circle cx="50" cy="403" r="2"/><circle cx="58" cy="403" r="2"/><circle cx="250" cy="387" r="2"/><circle cx="258" cy="387" r="2"/><circle cx="250" cy="395" r="2"/><circle cx="258" cy="395" r="2"/><circle cx="250" cy="403" r="2"/><circle cx="258" cy="403" r="2"/><circle cx="850" cy="387" r="2"/><circle cx="858" cy="387" r="2"/><circle cx="850" cy="395" r="2"/><circle cx="858" cy="395" r="2"/><circle cx="850" cy="403" r="2"/><circle cx="858" cy="403" r="2"/><circle cx="1300" cy="387" r="2"/><circle cx="1308" cy="387" r="2"/><circle cx="1300" cy="395" r="2"/><circle cx="1308" cy="395" r="2"/><circle cx="1300" cy="403" r="2"/><circle cx="1308" cy="403" r="2"/><circle cx="1666" cy="387" r="2"/><circle cx="1674" cy="387" r="2"/><circle cx="1666" cy="395" r="2"/><circle cx="1674" cy="395" r="2"/><circle cx="1666" cy="403" r="2"/><circle cx="1674" cy="403" r="2"/><circle cx="1876" cy="387" r="2"/><circle cx="1884" cy="387" r="2"/><circle cx="1876" cy="395" r="2"/><circle cx="1884" cy="395" r="2"/><circle cx="1876" cy="403" r="2"/><circle cx="1884" cy="403" r="2"/></g></svg>
<svg class="s" style="left:2468px;top:380px;overflow:hidden" width="8" height="30" viewBox="2468 380 8 30"><g fill="#d2d2d2"><circle cx="2474" cy="387" r="2"/><circle cx="2474" cy="395" r="2"/><circle cx="2474" cy="403" r="2"/></g></svg>
<svg class="s" style="left:1260px;top:390px;" width="24" height="15" viewBox="1260 390 24 15"><path d="M1264,393.5 H1279.8 L1271.9,402 Z" fill="#000"/></svg>
<div class="t" style="left:52.00px;top:475.04px;font-size:21px;color:#444;font-weight:400;font-family:'Liberation Mono',monospace;transform:scaleX(0.9390);transform-origin:left top;">bigint</div>
<div class="t" style="left:252.00px;top:475.04px;font-size:21px;color:#444;font-weight:400;font-family:'Liberation Mono',monospace;transform:scaleX(0.9522);transform-origin:left top;">string</div>
<div class="t" style="left:1302.00px;top:475.04px;font-size:21px;color:#444;font-weight:400;font-family:'Liberation Mono',monospace;transform:scaleX(0.9522);transform-origin:left top;">string</div>
<div class="t" style="left:1668.00px;top:475.04px;font-size:21px;color:#444;font-weight:400;font-family:'Liberation Mono',monospace;transform:scaleX(0.9522);transform-origin:left top;">string</div>
<div class="t" style="left:1878.00px;top:475.04px;font-size:21px;color:#444;font-weight:400;font-family:'Liberation Mono',monospace;transform:scaleX(0.9522);transform-origin:left top;">string</div>
<div class="t" style="left:52.00px;top:512.65px;font-size:21px;color:#1a9fdb;font-weight:400;font-family:'Liberation Sans',sans-serif;transform:scaleX(0.9942);transform-origin:left top;">Integer</div>
<div class="t" style="left:252.00px;top:512.65px;font-size:21px;color:#1a9fdb;font-weight:400;font-family:'Liberation Sans',sans-serif;transform:scaleX(0.9826);transform-origin:left top;">Natural lang.</div>
<div class="t" style="left:1302.00px;top:512.65px;font-size:21px;color:#1a9fdb;font-weight:400;font-family:'Liberation Sans',sans-serif;transform:scaleX(0.9737);transform-origin:left top;">Text</div>
<div class="t" style="left:1668.00px;top:512.65px;font-size:21px;color:#1a9fdb;font-weight:400;font-family:'Liberation Sans',sans-serif;transform:scaleX(0.9737);transform-origin:left top;">Text</div>
<div class="t" style="left:1878.00px;top:512.65px;font-size:21px;color:#1a9fdb;font-weight:400;font-family:'Liberation Sans',sans-serif;transform:scaleX(0.9826);transform-origin:left top;">Natural lang.</div>
<div class="r" style="left:2456px;top:1196px;width:20px;height:20px;background:rgba(170,170,170,0.55);"></div>
<svg class="s" style="left:0px;top:1190px;" width="30" height="28" viewBox="0 1190 30 28"><path d="M0,1196 A22,22 0 0 0 22,1218 L0,1218 Z" fill="#a8a8a8"/><path d="M0,1196 A22,22 0 0 0 22,1218" stroke="#111" stroke-width="1.6" fill="none"/></svg>
<svg class="s" style="left:2530px;top:1190px;" width="26" height="28" viewBox="2530 1190 26 28"><path d="M2556,1210 A23,23 0 0 1 2545.5,1218 L2556,1218 Z" fill="#a8a8a8"/><path d="M2556,1210 A23,23 0 0 1 2545.5,1218" stroke="#111" stroke-width="1.6" fill="none"/></svg>
<div class="r" style="left:847px;top:461px;width:545px;height:93px;background:#ffffff;box-shadow:8px 5px 20px -2px rgba(0,0,0,0.35);"></div>
<div class="r" style="left:849px;top:461px;width:543px;height:51px;background:#ececec;"></div>
<div class="r" style="left:847px;top:512px;width:545px;height:1px;background:#dddddd;"></div>
<svg class="s" style="left:850px;top:472px;" width="32" height="32" viewBox="850 472 32 32"><g stroke="#222" stroke-width="1.8" fill="none"><rect x="855.2" y="478.3" width="21.6" height="21.2" rx="3.5"/><path d="M860.2,487.7 V495.2 M866,490.6 V495.2 M872.3,482 V495.2"/></g></svg>
<div class="t" style="left:890.30px;top:477.32px;font-size:25.5px;color:#2a2a2a;font-weight:400;font-family:'Liberation Sans',sans-serif;transform:scaleX(0.9109);transform-origin:left top;">Analyze...</div>
<svg class="s" style="left:848px;top:520px;" width="30" height="30" viewBox="848 520 30 30"><g stroke="#222" stroke-width="1.8" fill="none"><path d="M852,534.8 H858"/><rect x="858.8" y="526.4" width="6.5" height="17.2"/><path d="M866.2,529.9 L871.2,534.8 L866.2,539.7"/></g></svg>
<div class="t" style="left:891.30px;top:523.33px;font-size:25.5px;color:#2a2a2a;font-weight:400;font-family:'Liberation Sans',sans-serif;transform:scaleX(0.9376);transform-origin:left top;">See column lineage</div>
<div class="r" style="left:836px;top:450px;width:566px;height:114px;box-sizing:border-box;border:10px solid #fe594a;filter:drop-shadow(1px 4px 2px rgba(0,0,0,0.55));"></div>
<svg class="s" style="left:2271px;top:175.8px;overflow:visible" width="140" height="100" viewBox="2271 175.8 140 100"><defs><filter id="f2" x="-20%" y="-20%" width="140%" height="140%"><feGaussianBlur in="SourceAlpha" stdDeviation="1.1"/><feOffset dx="1" dy="2.4"/><feComponentTransfer><feFuncA type="linear" slope="0.6"/></feComponentTransfer><feMerge><feMergeNode/><feMergeNode in="SourceGraphic"/></feMerge></filter></defs><path d="M2404,225.8 Q2370.02,204.42 2340.28,190.75 A40,40 0 1 0 2340.28,260.85 Q2370.02,247.18 2404,225.8 Z" fill="#fe594a" filter="url(#f2)"/></svg>
<div class="t" style="left:2310.50px;top:201.99px;font-size:51.9px;color:#ffffff;font-weight:400;font-family:'Liberation Sans',sans-serif;-webkit-text-stroke:1.1px #fff;">2</div>
<svg class="s" style="left:694px;top:438px;overflow:visible" width="140" height="100" viewBox="694 438 140 100"><defs><filter id="f3" x="-20%" y="-20%" width="140%" height="140%"><feGaussianBlur in="SourceAlpha" stdDeviation="1.1"/><feOffset dx="1" dy="2.4"/><feComponentTransfer><feFuncA type="linear" slope="0.6"/></feComponentTransfer><feMerge><feMergeNode/><feMergeNode in="SourceGraphic"/></feMerge></filter></defs><path d="M827,488 Q793.02,466.62 763.28,452.95 A40,40 0 1 0 763.28,523.05 Q793.02,509.38 827,488 Z" fill="#fe594a" filter="url(#f3)"/></svg>
<div class="t" style="left:733.80px;top:462.02px;font-size:53.5px;color:#ffffff;font-weight:400;font-family:'Liberation Sans',sans-serif;-webkit-text-stroke:1.1px #fff;">3</div>
<svg class="s" style="left:1524px;top:502px;overflow:visible" width="140" height="100" viewBox="1524 502 140 100"><defs><filter id="f1" x="-20%" y="-20%" width="140%" height="140%"><feGaussianBlur in="SourceAlpha" stdDeviation="1.1"/><feOffset dx="1" dy="2.4"/><feComponentTransfer><feFuncA type="linear" slope="0.6"/></feComponentTransfer><feMerge><feMergeNode/><feMergeNode in="SourceGraphic"/></feMerge></filter></defs><path d="M1657,552 Q1623.02,530.62 1593.28,516.95 A40,40 0 1 0 1593.28,587.05 Q1623.02,573.38 1657,552 Z" fill="#fe594a" filter="url(#f1)"/></svg>
<svg class="s" style="left:1560px;top:525px" width="30" height="52" viewBox="1560 525 30 52"><path d="M1577.8,533.9 H1584.3 V571.4 H1577.8 V545.3 H1569.2 V541 Q1576.3,540.6 1577.8,533.9 Z" fill="#fff"/></svg>
</body></html>
